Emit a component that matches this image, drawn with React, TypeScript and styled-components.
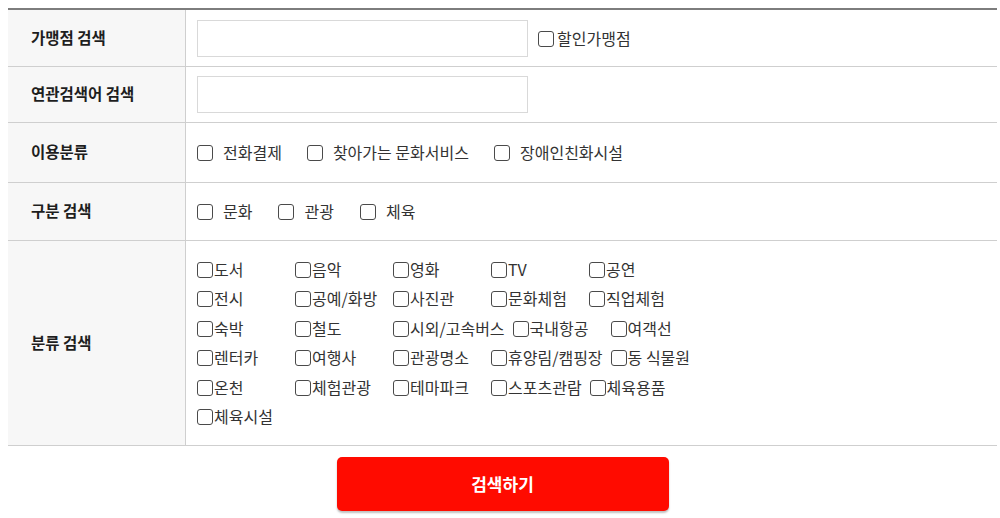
import React from "react";
import styled, { createGlobalStyle } from "styled-components";

const GlobalStyle = createGlobalStyle`
  html, body {
    margin: 0;
    padding: 0;
    background: #fff;
  }
  body {
    padding: 8px;
    font-family: "Noto Sans CJK KR", "Noto Sans", sans-serif;
    color: #333;
  }
`;

const Page = styled.div`
  width: 989px;
  display: flex;
  flex-direction: column;
  align-items: center;
`;

const Table = styled.div`
  width: 100%;
  border-top: 2px solid #7d7d7d;
`;

const Row = styled.div<{ $h?: number }>`
  display: grid;
  grid-template-columns: 178px 1fr;
  min-height: ${(p) => p.$h ?? 56}px;
  border-bottom: 1px solid #cfcfcf;
`;

const Label = styled.div`
  display: flex;
  align-items: center;
  padding: 0 0 3px 23px;
  background: #f7f7f7;
  border-right: 1px solid #cfcfcf;
  font-size: 15.5px;
  font-weight: 700;
  color: #1e1e1e;
`;

const Cell = styled.div<{ $pad?: string }>`
  display: flex;
  align-items: center;
  flex-wrap: wrap;
  padding: ${(p) => p.$pad ?? "0 0 2px 11px"};
`;

const TextInput = styled.input`
  width: 331px;
  height: 37px;
  box-sizing: border-box;
  border: 1px solid #d9d9d9;
  outline: none;
  padding: 0 10px;
  font-size: 14px;
  font-family: inherit;
`;

const Box = styled.input.attrs({ type: "checkbox" })`
  appearance: none;
  -webkit-appearance: none;
  width: 16px;
  height: 16px;
  margin: 2px 0 0;
  flex-shrink: 0;
  box-sizing: border-box;
  border: 1px solid #4a4a4a;
  border-radius: 3px;
  background: #fff;
`;

const Check = styled.label<{ $gap?: number; $after?: number }>`
  display: inline-flex;
  align-items: center;
  gap: ${(p) => p.$gap ?? 0}px;
  margin-right: ${(p) => p.$after ?? 0}px;
  font-size: 16px;
  color: #333;
  white-space: nowrap;
  cursor: pointer;
`;

const Grid = styled.div`
  width: 560px;
  display: flex;
  flex-wrap: wrap;
`;

const GridItem = styled(Check)`
  min-width: 98px;
  height: 29.5px;
  padding-right: 8px;
  box-sizing: border-box;
`;

const SearchButton = styled.button`
  margin-top: 11px;
  width: 332px;
  height: 54px;
  border: none;
  border-radius: 5px;
  background: #ff0b00;
  color: #fff;
  font-family: inherit;
  font-size: 17px;
  font-weight: 700;
  padding-bottom: 2px;
  box-shadow: 0 2px 2px rgba(0, 0, 0, 0.25);
  cursor: pointer;
`;

const usage = ["전화결제", "찾아가는 문화서비스", "장애인친화시설"];
const kinds = ["문화", "관광", "체육"];
const categories = [
  "도서", "음악", "영화", "TV", "공연",
  "전시", "공예/화방", "사진관", "문화체험", "직업체험",
  "숙박", "철도", "시외/고속버스", "국내항공", "여객선",
  "렌터카", "여행사", "관광명소", "휴양림/캠핑장", "동 식물원",
  "온천", "체험관광", "테마파크", "스포츠관람", "체육용품",
  "체육시설",
];

export default function App() {
  return (
    <>
      <GlobalStyle />
      <Page>
        <Table>
          <Row $h={56}>
            <Label>가맹점 검색</Label>
            <Cell $pad="0 0 0 11px">
              <TextInput />
              <Check $gap={3} style={{ marginLeft: 10 }}>
                <Box />
                할인가맹점
              </Check>
            </Cell>
          </Row>
          <Row $h={55}>
            <Label>연관검색어 검색</Label>
            <Cell $pad="0 0 0 11px">
              <TextInput />
            </Cell>
          </Row>
          <Row $h={59}>
            <Label>이용분류</Label>
            <Cell>
              {usage.map((u) => (
                <Check key={u} $gap={10} $after={25}>
                  <Box />
                  {u}
                </Check>
              ))}
            </Cell>
          </Row>
          <Row $h={57}>
            <Label>구분 검색</Label>
            <Cell>
              {kinds.map((k) => (
                <Check key={k} $gap={10} $after={26}>
                  <Box />
                  {k}
                </Check>
              ))}
            </Cell>
          </Row>
          <Row>
            <Label>분류 검색</Label>
            <Cell $pad="13px 0 14px 11px">
              <Grid>
                {categories.map((c) => (
                  <GridItem key={c} $gap={1}>
                    <Box />
                    {c}
                  </GridItem>
                ))}
              </Grid>
            </Cell>
          </Row>
        </Table>
        <SearchButton>검색하기</SearchButton>
      </Page>
    </>
  );
}
